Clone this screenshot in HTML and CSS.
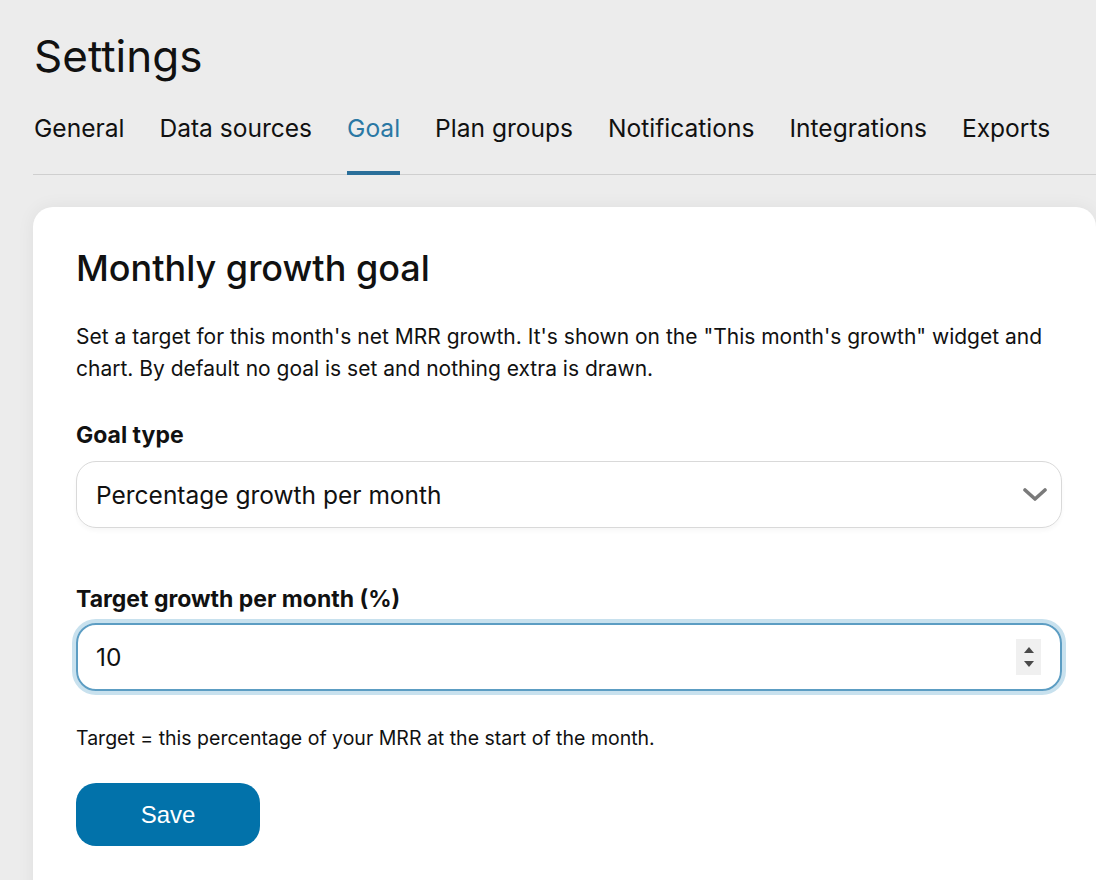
FILE: index.html
```html
<!DOCTYPE html>
<html lang="en">
<head>
<meta charset="utf-8">
<title>Settings</title>
<link rel="stylesheet" href="styles.css">
</head>
<body>
<main class="page">
  <h1 class="page-title">Settings</h1>
  <nav class="tabs">
    <a class="tab">General</a>
    <a class="tab">Data sources</a>
    <a class="tab active">Goal</a>
    <a class="tab">Plan groups</a>
    <a class="tab">Notifications</a>
    <a class="tab">Integrations</a>
    <a class="tab">Exports</a>
  </nav>
  <section class="card">
    <h2 class="card-title">Monthly growth goal</h2>
    <p class="intro">Set a target for this month's net MRR growth. It's shown on the "This month's growth" widget and chart. By default no goal is set and nothing extra is drawn.</p>
    <label class="label">Goal type</label>
    <div class="select">
      <span class="select-value">Percentage growth per month</span>
      <svg class="chevron" width="24" height="14" viewBox="0 0 24 14"><path d="M2 2 L12 11 L22 2" fill="none" stroke="#7a7a7a" stroke-width="3.6" stroke-linecap="round" stroke-linejoin="round"/></svg>
    </div>
    <label class="label label-target">Target growth per month (%)</label>
    <div class="field focus">
      <span class="field-value">10</span>
      <span class="spin">
        <svg width="12" height="8" viewBox="0 0 12 8"><path d="M1 7 L6 1 L11 7 Z" fill="#4a4a4a"/></svg>
        <svg width="12" height="8" viewBox="0 0 12 8"><path d="M1 1 L6 7 L11 1 Z" fill="#4a4a4a"/></svg>
      </span>
    </div>
    <p class="help">Target = this percentage of your MRR at the start of the month.</p>
    <button class="btn-save">Save</button>
  </section>
</main>
</body>
</html>
```

FILE: styles.css
```css
html, body {
  margin: 0;
  padding: 0;
  background: #ececec;
  overflow: hidden;
}
body {
  font-family: Inter, "Noto Sans", "Liberation Sans", sans-serif;
  color: #111;
}
.page {
  padding: 30px 0 0 33px;
}
.page-title {
  margin: 0;
  font-size: 44px;
  line-height: 52px;
  font-weight: 400;
  padding-left: 1px;
}
.tabs {
  display: flex;
  gap: 35px;
  margin-top: 30px;
  border-bottom: 1px solid #cfcfcf;
  padding-left: 1px;
}
.tab {
  font-size: 24.55px;
  line-height: 32px;
  color: #111;
  padding-bottom: 27px;
  border-bottom: 4px solid transparent;
  margin-bottom: -1px;
}
.tab.active {
  color: #2a78a4;
  border-bottom-color: #2a6f9a;
}
.card {
  margin-top: 32px;
  background: #fff;
  border-radius: 20px;
  padding: 39px 34px 40px 43px;
  box-shadow: 0 0 18px rgba(0,0,0,0.06);
  min-height: 700px;
}
.card-title {
  margin: 0;
  font-size: 36px;
  line-height: 44px;
  font-weight: 500;
}
.intro {
  margin: 31px 0 0;
  font-size: 21px;
  line-height: 32px;
}
.label {
  display: block;
  margin-top: 35px;
  font-size: 23px;
  line-height: 30px;
  font-weight: 700;
}
.label-target {
  margin-top: 56px;
}
.select {
  margin-top: 11px;
  height: 67px;
  box-sizing: border-box;
  border: 1px solid #d9d9d9;
  border-radius: 20px;
  display: flex;
  align-items: center;
  justify-content: space-between;
  padding: 0 14px 0 19px;
  box-shadow: 0 3px 4px rgba(0,0,0,0.03);
}
.select-value, .field-value {
  font-size: 24.5px;
}
.field {
  margin-top: 9px;
  height: 68px;
  box-sizing: border-box;
  border: 2px solid #5c9dc3;
  border-radius: 20px;
  box-shadow: 0 0 0 4px #c8e1ee;
  display: flex;
  align-items: center;
  justify-content: space-between;
  padding: 0 19px 0 18px;
}
.spin {
  display: flex;
  flex-direction: column;
  align-items: center;
  justify-content: center;
  gap: 6px;
  width: 25px;
  height: 36px;
  background: #f0f0f0;
}
.help {
  margin: 34px 0 0;
  font-size: 19.5px;
  line-height: 26px;
}
.btn-save {
  margin-top: 32px;
  width: 184px;
  height: 63px;
  border: none;
  border-radius: 20px;
  background: #0272aa;
  color: #fff;
  font-family: "Liberation Sans", Arial, sans-serif;
  font-size: 24px;
}
```
